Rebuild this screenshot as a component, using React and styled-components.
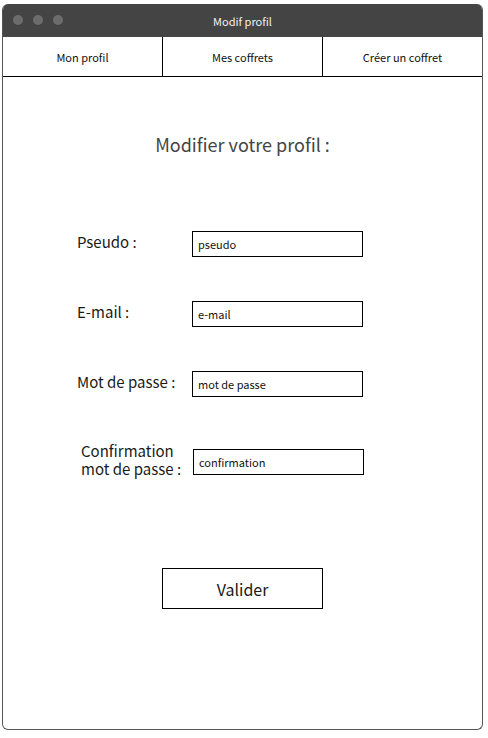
import React from "react";
import styled, { createGlobalStyle } from "styled-components";

const Global = createGlobalStyle`
  html, body { margin: 0; padding: 0; background: #fff; }
  body { font-family: "Noto Sans CJK SC", "Noto Sans", sans-serif; color: #1a1a1a; }
  * { box-sizing: border-box; }
`;

const Window = styled.div`
  margin: 4px 0 0 2px;
  width: 481px;
  height: 726px;
  border: 1px solid #555;
  border-top: none;
  border-radius: 6px;
  overflow: hidden;
  display: flex;
  flex-direction: column;
`;

const TitleBar = styled.div`
  position: relative;
  height: 33px;
  background: #444;
  display: flex;
  align-items: center;
  justify-content: center;
  color: #f2f2f2;
  font-size: 11px;
  margin: 0 -1px;
`;

const Dots = styled.div`
  position: absolute;
  left: 11px;
  top: 11px;
  display: flex;
  gap: 10px;
`;

const Dot = styled.span`
  width: 10px;
  height: 10px;
  border-radius: 50%;
  background: #6c6c6c;
`;

const Nav = styled.nav`
  display: grid;
  grid-template-columns: 159px 160px 1fr;
  height: 40px;
  border: 1px solid #000;
  border-top: none;
  margin: 0 -1px;
`;

const NavItem = styled.div`
  display: flex;
  align-items: center;
  justify-content: center;
  font-size: 11px;
  color: #111;
  border-left: ${(p) => (p.$first ? "none" : "1px solid #000")};
`;

const Content = styled.main`
  display: flex;
  flex-direction: column;
  align-items: center;
  padding-top: 55px;
`;

const Heading = styled.h1`
  margin: 0;
  font-size: 18px;
  line-height: 24px;
  font-weight: 400;
  color: #444;
`;

const Form = styled.form`
  align-self: stretch;
  display: flex;
  flex-direction: column;
  gap: 44px;
  margin-top: 75px;
  padding-left: 74px;
`;

const Row = styled.div`
  display: flex;
  align-items: center;
  margin-top: ${(p) => p.$extra || 0}px;
`;

const Label = styled.label`
  width: 114px;
  padding-left: ${(p) => p.$indent || 0}px;
  font-size: 15px;
  line-height: 18px;
  color: #1a1a1a;
  position: relative;
  top: -2px;
`;

const Field = styled.div`
  width: 171px;
  height: 26px;
  border: 1px solid #000;
  display: flex;
  align-items: center;
  padding-left: 5px;
  font-size: 11px;
  color: #111;
  margin-left: ${(p) => 1 + (p.$shift || 0)}px;
`;

const Button = styled.button`
  margin-top: 88px;
  width: 161px;
  height: 41px;
  background: #fff;
  border: 1px solid #000;
  font-family: inherit;
  font-size: 16px;
  color: #1a1a1a;
  padding: 0;
`;

export default function App() {
  return (
    <>
      <Global />
      <Window>
        <TitleBar>
          <Dots>
            <Dot />
            <Dot />
            <Dot />
          </Dots>
          Modif profil
        </TitleBar>
        <Nav>
          <NavItem $first>Mon profil</NavItem>
          <NavItem>Mes coffrets</NavItem>
          <NavItem>Créer un coffret</NavItem>
        </Nav>
        <Content>
          <Heading>Modifier votre profil :</Heading>
          <Form>
            <Row>
              <Label>Pseudo :</Label>
              <Field>pseudo</Field>
            </Row>
            <Row>
              <Label>E-mail :</Label>
              <Field>e-mail</Field>
            </Row>
            <Row>
              <Label>Mot de passe :</Label>
              <Field>mot de passe</Field>
            </Row>
            <Row $extra={3}>
              <Label $indent={4}>
                Confirmation
                <br />
                mot de passe :
              </Label>
              <Field $shift={1}>confirmation</Field>
            </Row>
          </Form>
          <Button type="button">Valider</Button>
        </Content>
      </Window>
    </>
  );
}
